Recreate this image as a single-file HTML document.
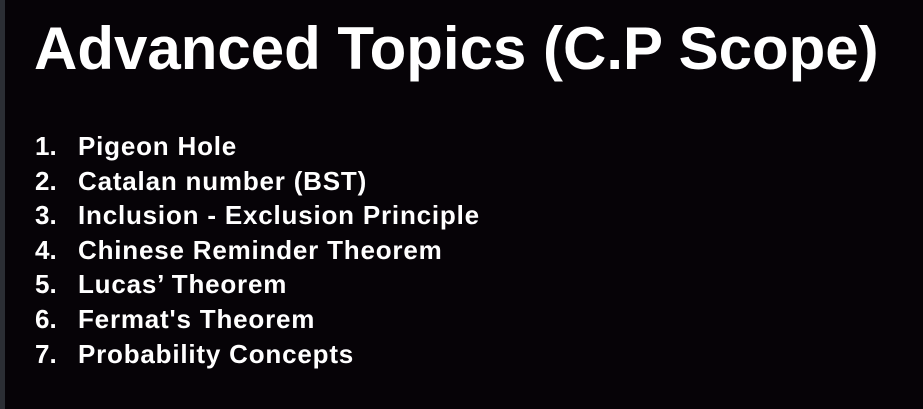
<!DOCTYPE html>
<html><head><style>
html,body{margin:0;padding:0;}
body{width:923px;height:409px;background:#060307;position:relative;overflow:hidden;font-family:"Liberation Sans",Arial,sans-serif;color:#fff;font-weight:bold;}
.bar{position:absolute;left:0;top:0;width:5px;height:409px;background:#2b2e34;}
h1{position:absolute;left:34px;top:14px;margin:0;font-size:60px;line-height:70px;font-weight:bold;letter-spacing:0px;white-space:nowrap;}
ol{position:absolute;left:35px;top:129px;margin:0;padding:0;list-style:none;font-size:26px;line-height:34.6px;letter-spacing:0.8px;}
li{white-space:nowrap;}
li span{display:inline-block;width:43px;letter-spacing:0;}
</style></head><body>
<div class="bar"></div>
<h1>Advanced Topics (C.P Scope)</h1>
<ol>
<li><span>1.</span>Pigeon Hole</li>
<li><span>2.</span>Catalan number (BST)</li>
<li><span>3.</span>Inclusion - Exclusion Principle</li>
<li><span>4.</span>Chinese Reminder Theorem</li>
<li><span>5.</span>Lucas’ Theorem</li>
<li><span>6.</span>Fermat's Theorem</li>
<li><span>7.</span>Probability Concepts</li>
</ol>
</body></html>
